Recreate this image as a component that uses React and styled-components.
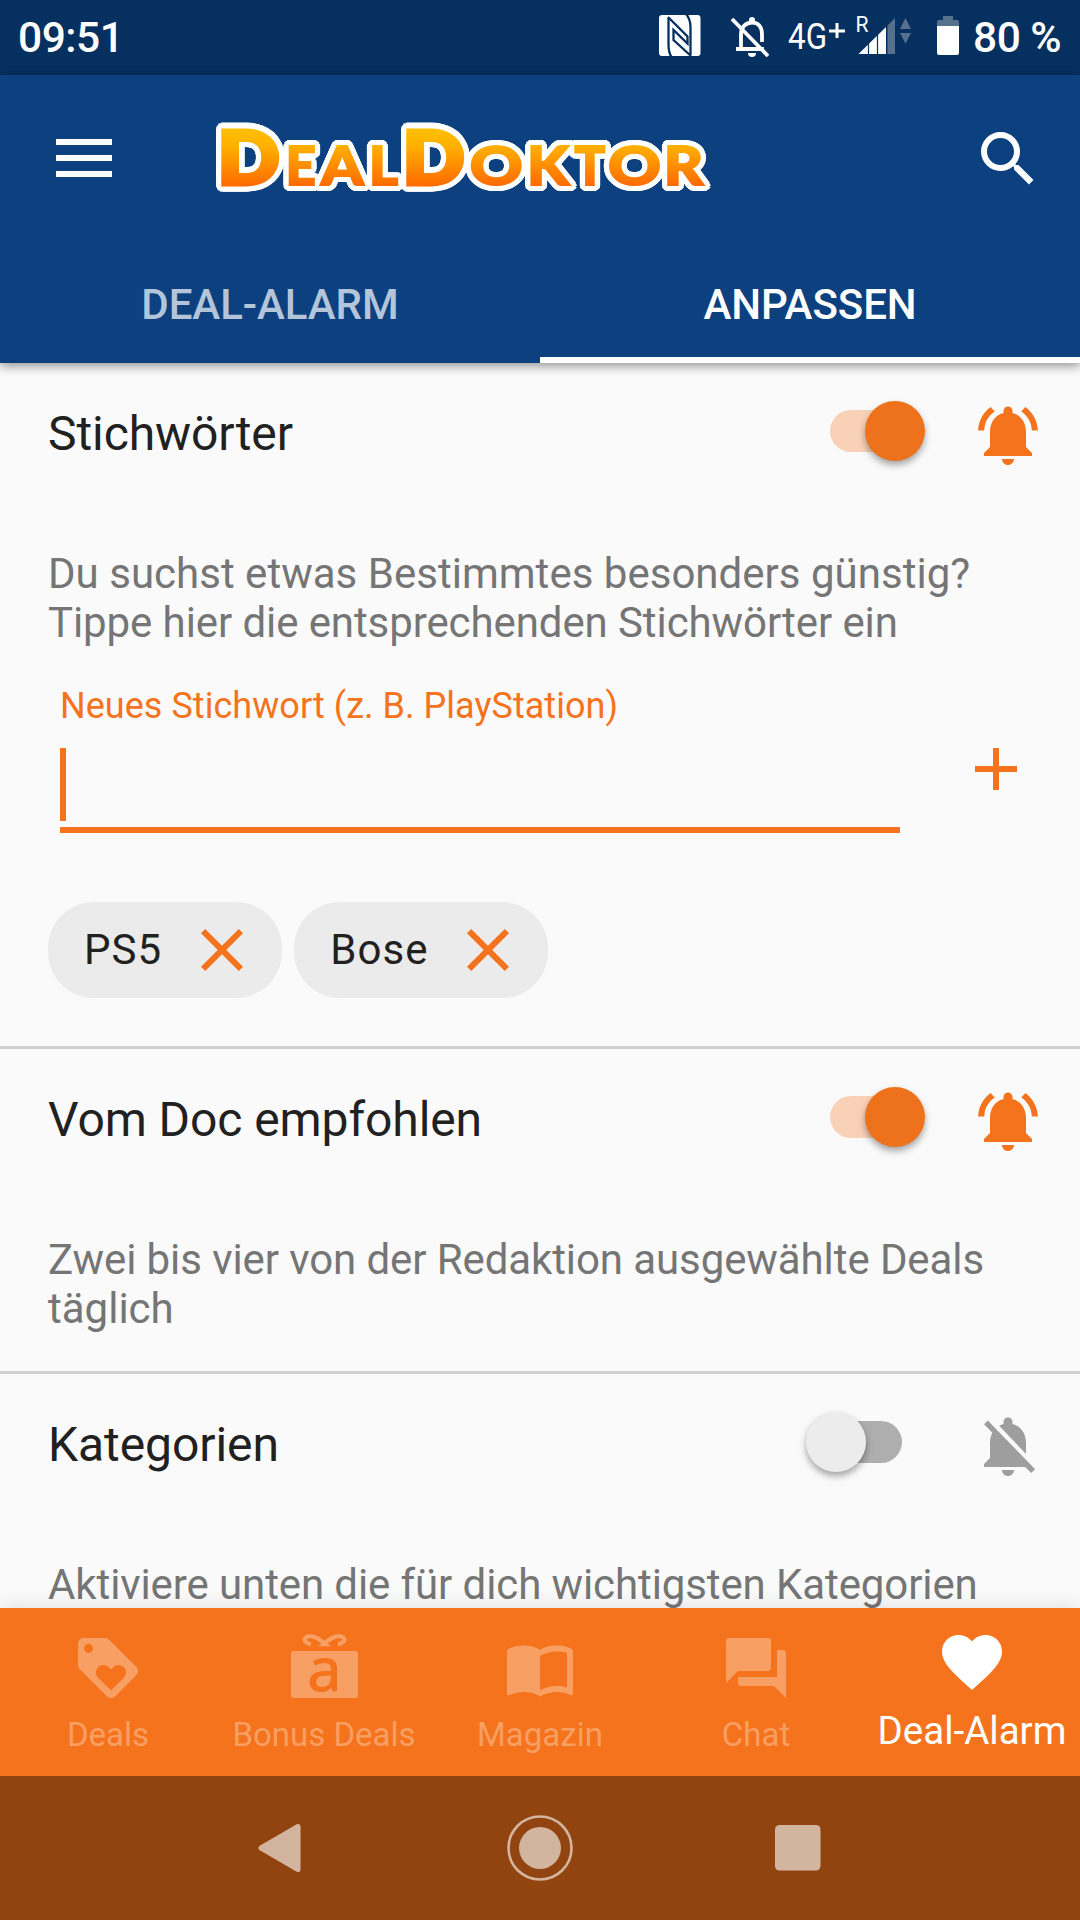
import { useState } from "react";
import styled, { createGlobalStyle } from "styled-components";
import {
  MdAdd,
  MdClose,
  MdFavorite,
  MdLoyalty,
  MdNotificationsActive,
  MdNotificationsOff,
  MdSearch,
} from "react-icons/md";

const sections = [
  {
    id: "keywords",
    title: "Stichwörter",
    lines: [
      { text: "Du suchst etwas Bestimmtes besonders günstig?", tracking: 0.02 },
      { text: "Tippe hier die entsprechenden Stichwörter ein", tracking: -0.09 },
    ],
    active: true,
  },
  {
    id: "doc",
    title: "Vom Doc empfohlen",
    lines: [
      { text: "Zwei bis vier von der Redaktion ausgewählte Deals", tracking: -0.09 },
      { text: "täglich", tracking: 0 },
    ],
    active: true,
  },
  {
    id: "categories",
    title: "Kategorien",
    lines: [
      { text: "Aktiviere unten die für dich wichtigsten Kategorien", tracking: -0.1 },
    ],
    active: false,
  },
];

const GiftIcon = () => (
  <svg width="72" height="72" viewBox="0 0 72 72">
    <path
      d="M23 12.500C12 9.500 17 2.500 25 4.500C30 6 34 9 36.500 12C39 9 43 6 48 4.500C56 2.500 61 9.500 50 12.500"
      fill="none"
      stroke="currentColor"
      strokeWidth="4.200"
      strokeLinejoin="round"
    />
    <path d="M30 14.300L36.500 9L43 14.300z" fill="currentColor" />
    <rect x="3" y="19" width="67" height="47" rx="2.500" fill="currentColor" />
    <GiftLetter x="36.500" y="59" textAnchor="middle">
      a
    </GiftLetter>
  </svg>
);

const BookIcon = () => (
  <svg width="72" height="72" viewBox="0 0 24 24" fill="currentColor">
    <path d="M21 5c-1.11-.35-2.33-.5-3.5-.5-1.95 0-4.05.4-5.5 1.5-1.45-1.1-3.55-1.5-5.5-1.5S2.45 4.9 1 6v14.65c0 .25.25.5.5.5.1 0 .15-.05.25-.05C3.1 20.45 5.05 20 6.5 20c1.95 0 4.05.4 5.5 1.5 1.35-.85 3.8-1.5 5.5-1.5 1.65 0 3.35.3 4.75 1.05.1.05.15.05.25.05.25 0 .5-.25.5-.5V6c-.6-.45-1.25-.75-2-1zm0 13.5c-1.1-.35-2.3-.5-3.5-.5-1.7 0-4.15.65-5.5 1.5V8c1.35-.85 3.8-1.5 5.5-1.5 1.2 0 2.4.15 3.5.5v11.5z" />
  </svg>
);

const ChatIcon = () => (
  <svg width="72" height="72" viewBox="0 0 24 24" fill="currentColor">
    <path d="M21 6h-2v9H6v2c0 .55.45 1 1 1h11l4 4V7c0-.55-.45-1-1-1zm-4 6V3c0-.55-.45-1-1-1H3c-.55 0-1 .45-1 1v14l4-4h10c.55 0 1-.45 1-1z" />
  </svg>
);

const navItems = [
  { label: "Deals", icon: <MdLoyalty size={72} /> },
  { label: "Bonus Deals", icon: <GiftIcon /> },
  { label: "Magazin", icon: <BookIcon /> },
  { label: "Chat", icon: <ChatIcon /> },
  { label: "Deal-Alarm", icon: <MdFavorite size={72} /> },
];

// letter, left edge, drawn width, tall initial
const logoLetters = [
  ["D", 3.1, 61.2, true],
  ["E", 70.7, 30],
  ["A", 106, 42.5],
  ["L", 154, 29],
  ["D", 188.1, 61.2, true],
  ["O", 254.7, 53],
  ["K", 312, 42],
  ["T", 359.6, 30.7],
  ["O", 393, 53],
  ["R", 448.7, 39.5],
];

// the white rim is the word mark repeated on a small circle behind the fill
const rim = Array.from({ length: 20 }, (_, i) => {
  const angle = (i / 20) * Math.PI * 2;
  return [Math.cos(angle) * 5.3, Math.sin(angle) * 5.3];
});

const LogoMark = () => (
  <svg width="500" height="76" viewBox="0 0 500 76">
    <defs>
      <linearGradient
        id="logoFill"
        gradientUnits="userSpaceOnUse"
        x1="0"
        y1="8"
        x2="0"
        y2="65"
      >
        <stop offset="0" stopColor="#ffc000" />
        <stop offset="0.3" stopColor="#ffb000" />
        <stop offset="1" stopColor="#ff6a00" />
      </linearGradient>
      <g id="logoText">
        {logoLetters.map(([letter, x, width, tall], i) => (
          <LogoLetter
            key={i}
            x={x}
            y={tall ? 62.7 : 64.2}
            $tall={tall}
            textLength={width}
            lengthAdjust="spacingAndGlyphs"
          >
            {letter}
          </LogoLetter>
        ))}
      </g>
    </defs>
    <g fill="#fff" stroke="#fff">
      {rim.map(([x, y], i) => (
        <use key={i} href="#logoText" x={x} y={y} />
      ))}
    </g>
    <use href="#logoText" fill="url(#logoFill)" stroke="url(#logoFill)" />
  </svg>
);

const StatusIcons = () => (
  <svg width="310" height="75" viewBox="650 0 310 75">
    <rect x="659" y="15" width="41.500" height="41" rx="3" fill="#fff" />
    <g fill="none" stroke="#06305f" strokeWidth="2.300">
      <path d="M668.500 18V44Q668.500 53 671.500 57" />
      <path d="M686 14Q690.500 19 690.500 27V55" />
      <path d="M668 17L687.500 36.500V43.500L673.500 30V40L691 56" />
    </g>
    <g fill="none" stroke="#fff" strokeWidth="3.800">
      <path d="M736 49H764M741 47V34C741 27 746 22.500 752 22.500C758 22.500 762 27 762 34V42" />
      <path d="M732 19L768 56" />
    </g>
    <path d="M749 22V20a3 3 0 0 1 6 0V22zM748 53H756a4 4 0 0 1-8 0z" fill="#fff" />
    <StatusLabel x="788" y="49" fontSize="37" textLength="39" lengthAdjust="spacingAndGlyphs">
      4G
    </StatusLabel>
    <path d="M829 31H845M837 23V38" stroke="#fff" strokeWidth="3" />
    <StatusLabel x="855.500" y="32" fontSize="22" textLength="13" lengthAdjust="spacingAndGlyphs">
      R
    </StatusLabel>
    <path d="M858.500 54L886 27V54z" fill="#fff" />
    <path d="M868.500 40V54M877.500 32V54" stroke="#06305f" strokeWidth="1.200" />
    <path
      d="M887.500 25.500L895 18V54H887.500zM900 29L905.500 18L911 29zM900 33H911L905.500 43.500z"
      fill="#56708e"
    />
    <path d="M937 26V22q0-2 2-2H943V16H953V20H957q2 0 2 2V26z" fill="#56708e" />
    <path d="M937 26H959V53q0 2-2 2H939q-2 0-2-2z" fill="#fff" />
  </svg>
);

const App = () => {
  const [keywords, setKeywords] = useState(["PS5", "Bose"]);
  const [enabled, setEnabled] = useState(
    Object.fromEntries(sections.map((s) => [s.id, s.active]))
  );

  const toggle = (id) => {
    setEnabled((current) => ({ ...current, [id]: !current[id] }));
  };
  const removeKeyword = (word) => {
    setKeywords((current) => current.filter((item) => item !== word));
  };

  return (
    <Screen>
      <GlobalStyle />
      <StatusBar>
        <StatusText>09:51</StatusText>
        <StatusRight>
          <StatusIcons />
          <StatusText>80 %</StatusText>
        </StatusRight>
      </StatusBar>
      <Header>
        <Toolbar>
          <MenuButton aria-label="Menü">
            <span />
            <span />
            <span />
          </MenuButton>
          <Logo>
            <LogoMark />
          </Logo>
          <IconButton aria-label="Suche">
            <MdSearch size={72} />
          </IconButton>
        </Toolbar>
        <Tabs>
          <Tab>DEAL-ALARM</Tab>
          <Tab $active>ANPASSEN</Tab>
        </Tabs>
      </Header>

      <Content>
        {sections.map((section) => (
          <Section key={section.id}>
            <SectionHead>
              <h2>{section.title}</h2>
              <Switch
                role="switch"
                aria-checked={enabled[section.id]}
                onClick={() => toggle(section.id)}
              >
                <Track $on={enabled[section.id]} />
                <Thumb $on={enabled[section.id]} />
              </Switch>
              <Bell $on={enabled[section.id]}>
                {enabled[section.id] ? (
                  <MdNotificationsActive size={72} />
                ) : (
                  <MdNotificationsOff size={72} />
                )}
              </Bell>
            </SectionHead>
            <Description>
              {section.lines.map((line) => (
                <Line key={line.text} $tracking={line.tracking}>
                  {line.text}
                </Line>
              ))}
            </Description>
            {section.id === "keywords" && (
              <>
                <InputRow>
                  <Field>
                    <label>Neues Stichwort (z. B. PlayStation)</label>
                    <Cursor />
                  </Field>
                  <AddButton aria-label="Hinzufügen">
                    <MdAdd size={72} />
                  </AddButton>
                </InputRow>
                <Chips>
                  {keywords.map((word) => (
                    <Chip key={word}>
                      <span>{word}</span>
                      <MdClose size={72} onClick={() => removeKeyword(word)} />
                    </Chip>
                  ))}
                </Chips>
              </>
            )}
          </Section>
        ))}
      </Content>

      <BottomNav>
        {navItems.map((item) => (
          <NavItem key={item.label} $active={item.label === "Deal-Alarm"}>
            {item.icon}
            <span>{item.label}</span>
          </NavItem>
        ))}
      </BottomNav>
      <SystemNav>
        <svg width="72" height="72" viewBox="0 0 72 72">
          <path
            d="M16 36L53 14.500V57.500z"
            fill="currentColor"
            stroke="currentColor"
            strokeWidth="5"
            strokeLinejoin="round"
          />
        </svg>
        <svg width="72" height="72" viewBox="0 0 72 72">
          <circle cx="36" cy="36" r="31.500" fill="none" stroke="currentColor" strokeWidth="2.600" />
          <circle cx="36" cy="36" r="21" fill="currentColor" />
        </svg>
        <svg width="72" height="72" viewBox="0 0 72 72">
          <rect x="12" y="13" width="45.500" height="45.500" rx="4.500" fill="currentColor" />
        </svg>
      </SystemNav>
    </Screen>
  );
};

const GlobalStyle = createGlobalStyle`
  * {
    box-sizing: border-box;
  }
  body {
    margin: 0;
    font-family: Roboto, "Liberation Sans", sans-serif;
    background: #fafafa;
  }
  button {
    border: none;
    padding: 0;
    background: transparent;
    color: inherit;
    font: inherit;
  }
  svg {
    display: block;
    flex-shrink: 0;
    overflow: visible;
  }
`;

const Screen = styled.div`
  display: flex;
  flex-direction: column;
  width: 1080px;
  height: 1920px;
  overflow: hidden;
`;
const StatusBar = styled.div`
  display: flex;
  justify-content: space-between;
  align-items: center;
  flex: 0 0 75px;
  padding: 0 19px 0 18px;
  background: #06305f;
  color: #fff;
`;
const StatusText = styled.span`
  font-size: 42.500px;
  font-weight: 500;
  line-height: 75px;
  letter-spacing: -0.500px;
  white-space: nowrap;
`;
const StatusRight = styled.div`
  display: flex;
  align-items: center;
  gap: 13px;
  ${StatusText} {
    width: 88px;
  }
`;
const StatusLabel = styled.text`
  fill: #fff;
  font-family: Roboto, sans-serif;
`;
const Header = styled.header`
  flex: 0 0 288px;
  background: #0c407f;
  color: #fff;
  box-shadow: 0 3px 10px rgba(0, 0, 0, 0.42);
  z-index: 1;
`;
const Toolbar = styled.div`
  display: flex;
  align-items: center;
  height: 168px;
  padding: 0 36px 0 56px;
`;
const MenuButton = styled.button`
  display: flex;
  flex-direction: column;
  gap: 10px;
  width: 56px;
  margin-bottom: 2px;
  span {
    height: 6px;
    background: #fff;
  }
`;
const Logo = styled.div`
  margin-left: 103px;
  margin-right: auto;
`;
const LogoLetter = styled.text`
  font-family: Lato, sans-serif;
  font-weight: 900;
  font-size: ${({ $tall }) => ($tall ? "71.600px" : "52.900px")};
  stroke-width: ${({ $tall }) => ($tall ? 5 : 2)};
`;
const IconButton = styled.button`
  width: 72px;
  height: 72px;
`;
const Tabs = styled.div`
  display: flex;
  height: 120px;
`;
const Tab = styled.button`
  flex: 1;
  padding-top: 8px;
  font-size: 42px;
  font-weight: 500;
  letter-spacing: -0.050px;
  color: ${({ $active }) => ($active ? "#fff" : "#b5c5d9")};
  border-bottom: 6px solid ${({ $active }) => ($active ? "#fff" : "transparent")};
`;
const Content = styled.main`
  flex: 1;
  min-height: 0;
  overflow: hidden;
  background: #fafafa;
`;
const Section = styled.section`
  padding: 36px 0 38px;
  border-bottom: 3px solid #d0d0d0;
`;
const SectionHead = styled.div`
  display: flex;
  align-items: center;
  height: 72px;
  padding: 0 36px 0 48px;
  h2 {
    flex: 1;
    margin: 0;
    padding-bottom: 4px;
    font-size: 48px;
    font-weight: 400;
    letter-spacing: -0.080px;
    color: #212121;
  }
`;
const Switch = styled.button`
  position: relative;
  display: flex;
  align-items: center;
  width: 119px;
  height: 60px;
  margin: 0 47px 8px 0;
`;
const Track = styled.span`
  width: 72px;
  height: 42px;
  margin: 0 auto;
  border-radius: 21px;
  background: ${({ $on }) => ($on ? "#f9d1b7" : "#aeaeae")};
`;
const Thumb = styled.span`
  position: absolute;
  top: 0;
  ${({ $on }) => ($on ? "right: 0;" : "left: 0;")}
  width: 60px;
  height: 60px;
  border-radius: 50%;
  background: ${({ $on }) => ($on ? "#ee711c" : "#ececec")};
  box-shadow: 0 4px 7px rgba(0, 0, 0, 0.35);
`;
const Bell = styled.div`
  color: ${({ $on }) => ($on ? "#f5731c" : "#9e9e9e")};
`;
const Description = styled.p`
  margin: 78px 48px 0;
  font-size: 42px;
  line-height: 49px;
  color: #757575;
`;
const Line = styled.span`
  display: block;
  letter-spacing: ${({ $tracking }) => $tracking}px;
`;
const InputRow = styled.div`
  display: flex;
  align-items: flex-end;
  margin: 38px 48px 0 60px;
  color: #f5731c;
`;
const Field = styled.div`
  width: 840px;
  border-bottom: 6px solid #f5731c;
  label {
    display: block;
    font-size: 36px;
    line-height: 42px;
    letter-spacing: 0.040px;
  }
`;
const Cursor = styled.div`
  width: 6px;
  height: 73px;
  margin: 21px 0 6px;
  background: #f5731c;
`;
const AddButton = styled.button`
  margin: 0 0 28px 60px;
`;
const Chips = styled.div`
  display: flex;
  gap: 12px;
  margin: 69px 48px 10px;
`;
const Chip = styled.div`
  display: flex;
  align-items: center;
  gap: 24px;
  height: 96px;
  padding: 0 24px 0 36px;
  border-radius: 46px;
  background: #ebebeb;
  color: #212121;
  font-size: 42px;
  letter-spacing: 1.050px;
  span {
    margin-top: -2px;
  }
  svg {
    color: #f5731c;
  }
`;
const BottomNav = styled.nav`
  display: flex;
  flex: 0 0 168px;
  background: #f5731c;
  box-shadow: 0 0 20px rgba(0, 0, 0, 0.12);
  z-index: 1;
`;
const NavItem = styled.button`
  display: flex;
  flex-direction: column;
  align-items: center;
  flex: 0 0 216px;
  padding-top: ${({ $active }) => ($active ? "18px" : "24px")};
  color: ${({ $active }) => ($active ? "#fff" : "#f89f63")};
  span {
    margin-top: ${({ $active }) => ($active ? "10px" : "8px")};
    font-size: ${({ $active }) => ($active ? "38.500px" : "33px")};
    line-height: 46px;
    white-space: nowrap;
  }
`;
const GiftLetter = styled.text`
  fill: #f5731c;
  stroke: #f5731c;
  stroke-width: 1.200px;
  font-family: "Open Sans", sans-serif;
  font-size: 61px;
`;
const SystemNav = styled.div`
  display: flex;
  justify-content: center;
  align-items: center;
  gap: 187px;
  flex: 0 0 144px;
  background: #914410;
  color: #d3b49f;
  z-index: 1;
`;

export default App;
